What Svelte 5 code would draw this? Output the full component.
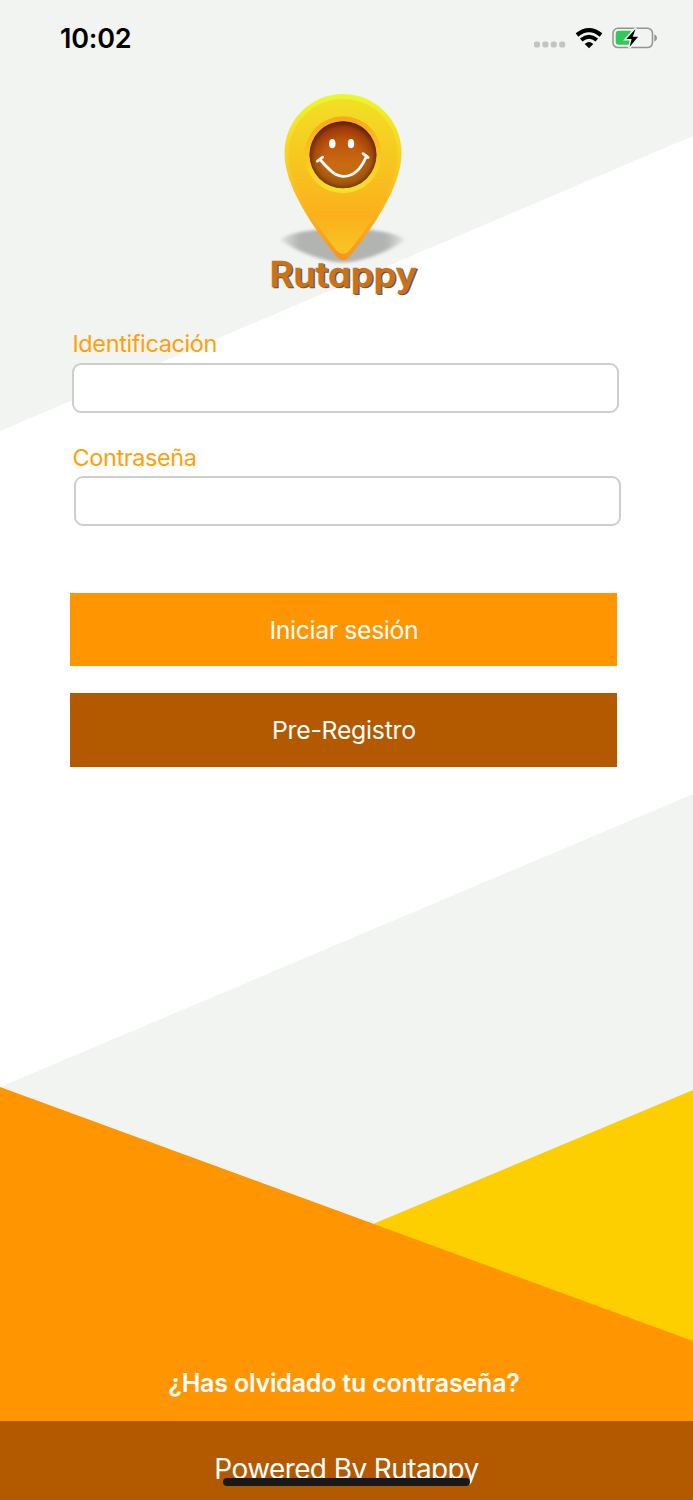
<script>
  let identificacion = '';
  let contrasena = '';
</script>

<main class="screen">
  <svg class="backdrop" viewBox="0 0 693 1500" aria-hidden="true">
    <rect width="693" height="1500" fill="#fff" />
    <path d="M0 0H693V136L0 431Z" fill="#f1f4f1" />
    <path d="M0 1087L693 794V1500H0Z" fill="#f1f4f1" />
    <path d="M373 1224L693 1090V1345Z" fill="#fdce00" />
    <path d="M0 1087L693 1341V1500H0Z" fill="#ff9500" />
  </svg>

  <header class="status">
    <span class="time">10:02</span>
    <div class="indicators">
      <svg class="signal" width="32" height="7" viewBox="0 0 32 7">
        {#each [0, 8.4, 16.8, 25.2] as x}
          <rect {x} y="0.5" width="6" height="6" rx="2" fill="#c2c4c2" />
        {/each}
      </svg>
      <svg class="wifi" width="28" height="21" viewBox="0 0 28 21">
        <path d="M2 7Q14 -2.600 26 7" fill="none" stroke="#000" stroke-width="4.200" />
        <path d="M6.200 12Q14 5.600 21.800 12" fill="none" stroke="#000" stroke-width="4" />
        <path d="M9.700 16Q14 12.200 18.300 16L14 20.300Z" fill="#000" />
      </svg>
      <svg class="battery" width="46" height="22" viewBox="0 0 46 22">
        <rect x="1" y="1.2" width="39.5" height="19.4" rx="5" fill="none" stroke="#929492" stroke-width="1.5" />
        <rect x="3.7" y="3.8" width="16.5" height="14" rx="3" fill="#34c759" />
        <path d="M42.4 7.3Q45 8.2 45 11T42.4 14.7Z" fill="#929492" />
        <path d="M23.8 1L13.5 12.5H19L17.2 21L26.5 9.8H20.8Z" fill="#f1f4f1" stroke="#f1f4f1" stroke-width="2.200" />
        <path d="M23.5 2L14.3 12H19.6L17.5 20L26.1 9.8H20.8Z" fill="#000" />
      </svg>
    </div>
  </header>

  <svg class="logo" width="170" height="225" viewBox="260 80 170 225" role="img" aria-label="Rutappy">
    <defs>
      <linearGradient id="rim" x1="0" y1="0" x2="0" y2="1">
        <stop offset="0" stop-color="#e9f92b" />
        <stop offset=".3" stop-color="#f8d824" />
        <stop offset=".7" stop-color="#fbb41e" />
        <stop offset="1" stop-color="#fb921b" />
      </linearGradient>
      <linearGradient id="body" x1="0" y1="0" x2="0" y2="1">
        <stop offset="0" stop-color="#f2e024" />
        <stop offset=".75" stop-color="#fbb01b" />
        <stop offset="1" stop-color="#f9c623" />
      </linearGradient>
      <linearGradient id="ring" x1="0" y1="0" x2="0" y2="1">
        <stop offset="0" stop-color="#fba61b" />
        <stop offset=".5" stop-color="#f9c422" />
        <stop offset="1" stop-color="#f2e426" />
      </linearGradient>
      <linearGradient id="face" x1="0" y1="0" x2="0" y2="1">
        <stop offset="0" stop-color="#b54009" />
        <stop offset=".65" stop-color="#c96b10" />
        <stop offset="1" stop-color="#b66b0f" />
      </linearGradient>
      <radialGradient id="shade" cx=".5" cy=".52" r=".53">
        <stop offset=".5" stop-color="#451000" stop-opacity="0" />
        <stop offset=".8" stop-color="#451000" stop-opacity=".25" />
        <stop offset="1" stop-color="#360c00" stop-opacity=".75" />
      </radialGradient>
      <linearGradient id="ground" x1="0" y1="0" x2="1" y2="0">
        <stop offset="0" stop-color="#b2b4b2" stop-opacity=".3" />
        <stop offset=".15" stop-color="#b2b4b2" />
        <stop offset=".85" stop-color="#b2b4b2" />
        <stop offset="1" stop-color="#b2b4b2" stop-opacity=".3" />
      </linearGradient>
      <filter id="soft" x="-20%" y="-30%" width="140%" height="160%">
        <feGaussianBlur stdDeviation="2.5 1.8" />
      </filter>
    </defs>
    <path d="M281 240C294 225 391 225 404 240C389 252 360 262.500 343 262.500S297 252 281 240Z" fill="url(#ground)" filter="url(#soft)" />
    <path d="M343 94C375 94 401.500 120 401.500 153C401.500 188 370 231 350 256Q343 264.500 336 256C316 231 284.500 188 284.500 153C284.500 120 311 94 343 94Z" fill="url(#rim)" />
    <path d="M343 99C373 99 397.500 123 397.500 154C397.500 187 367 229 349 251Q343 257 337 251C319 229 288.500 187 288.500 154C288.500 123 313 99 343 99Z" fill="url(#body)" />
    <circle cx="343" cy="154.700" r="38.500" fill="url(#ring)" />
    <circle cx="343" cy="154.700" r="33.500" fill="url(#face)" />
    <circle cx="343" cy="154.700" r="33.500" fill="url(#shade)" />
    <ellipse cx="332.300" cy="143.600" rx="3.200" ry="4.700" fill="#fff" />
    <ellipse cx="351" cy="143.600" rx="3.200" ry="4.700" fill="#fff" />
    <path d="M320.500 160C330 171 336 176.300 344 176.300C353 176.300 361 169 366.300 156.500" fill="none" stroke="#fff" stroke-width="2.800" />
    <path d="M317.500 161.200L322.700 157.200M363 153.700L368.200 157.500" fill="none" stroke="#fff" stroke-width="2.800" stroke-linecap="round" />
    <g class="wordmark">
      <text x="271" y="288" textLength="147.500" lengthAdjust="spacingAndGlyphs" fill="#575757" stroke="#575757">Rutappy</text>
      <text x="269.500" y="286.500" textLength="147.500" lengthAdjust="spacingAndGlyphs" fill="#cc7115" stroke="#cc7115">Rutappy</text>
    </g>
  </svg>

  <form class="login" on:submit|preventDefault>
    <label for="identificacion">Identificación</label>
    <input id="identificacion" type="text" bind:value={identificacion} />
    <label class="second" for="contrasena">Contraseña</label>
    <input class="password" id="contrasena" type="password" bind:value={contrasena} />
    <button class="primary" type="submit">Iniciar sesión</button>
    <button class="secondary" type="button">Pre-Registro</button>
  </form>

  <div class="forgot">¿Has olvidado tu contraseña?</div>
  <footer>
    <span>Powered By Rutappy</span>
    <div class="home-indicator"></div>
  </footer>
</main>

<style>
  :global(body) {
    margin: 0;
  }

  .screen {
    position: relative;
    display: flex;
    flex-direction: column;
    width: 693px;
    height: 1500px;
    overflow: hidden;
    font-family: Inter, "Liberation Sans", sans-serif;
  }

  .backdrop {
    position: absolute;
    inset: 0;
    z-index: -1;
  }

  .status {
    display: flex;
    justify-content: space-between;
    height: 80px;
    box-sizing: border-box;
    padding: 22px 35px 0 60px;
  }

  .time {
    font-size: 27px;
    font-weight: 600;
    line-height: 33px;
    letter-spacing: -0.2px;
  }

  .indicators {
    display: flex;
    align-items: flex-end;
    height: 27px;
  }

  .signal {
    margin-bottom: 1px;
  }

  .wifi {
    margin-left: 9px;
  }

  .battery {
    margin-left: 9px;
  }

  .logo {
    flex: none;
    margin-left: 260px;
  }

  .wordmark {
    font-size: 35px;
    font-weight: 600;
    font-feature-settings: "cv11";
    stroke-width: 0.4px;
    stroke-linejoin: round;
  }

  .login {
    display: flex;
    flex-direction: column;
    width: 547px;
    margin: 25px 0 0 70.4px;
  }

  label {
    height: 33px;
    padding-left: 2px;
    color: #ff9f0a;
    font-size: 23.5px;
    line-height: 27px;
    letter-spacing: -0.38px;
  }

  input {
    box-sizing: border-box;
    width: 547px;
    height: 50px;
    margin-left: 1.6px;
    border: 2px solid #cecece;
    border-radius: 9px;
    background: #fff;
    font: inherit;
    font-size: 23px;
    padding: 0 12px;
  }

  .second {
    height: 32px;
    margin-top: 31px;
  }

  .password {
    margin-left: 3.6px;
  }

  button {
    height: 73.5px;
    padding: 1px 0 0;
    border: none;
    color: #fff;
    font-family: inherit;
    font-size: 24.8px;
    letter-spacing: -0.36px;
  }

  .primary {
    margin-top: 66.7px;
    background: #ff9500;
  }

  .secondary {
    margin-top: 27px;
    background: #b35900;
    letter-spacing: -0.26px;
  }

  .forgot {
    margin-top: auto;
    padding: 0 0 21px;
    color: #fff;
    font-size: 25px;
    font-weight: 600;
    line-height: 34px;
    letter-spacing: -0.2px;
    text-align: center;
    text-indent: -5px;
  }

  footer {
    position: relative;
    height: 79px;
    background: #b35900;
    color: #fff;
    font-size: 28px;
    line-height: 34px;
    letter-spacing: -0.6px;
    text-align: center;
    padding-top: 31px;
    box-sizing: border-box;
  }

  .home-indicator {
    position: absolute;
    left: 223px;
    bottom: 14px;
    width: 247px;
    height: 8px;
    border-radius: 4px;
    background: #191919;
  }
</style>
